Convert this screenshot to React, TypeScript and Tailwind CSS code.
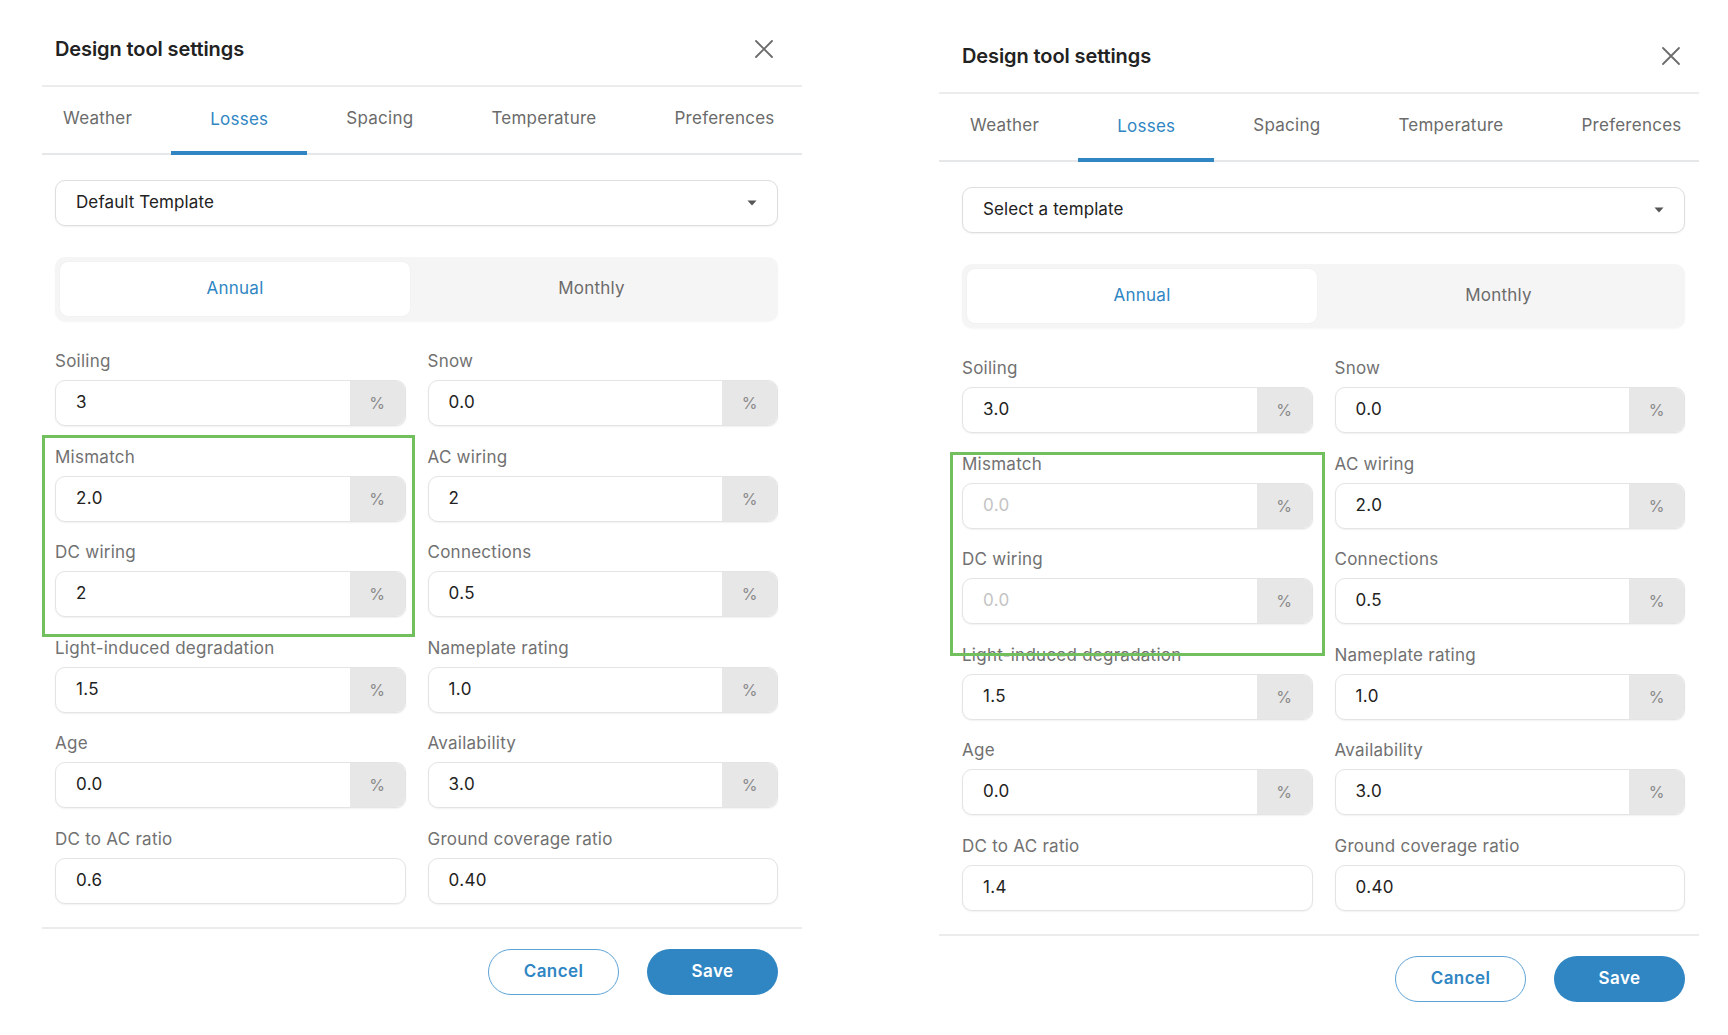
import React from "react";

type Field = { label: string; value: string; pct: boolean; disabled?: boolean };

function Input({ f }: { f: Field }) {
  return (
    <div className="flex flex-col">
      <div className="h-[20px] text-[17px] leading-[20px] tracking-[0.25px] text-[#717171]">{f.label}</div>
      <div className="mt-[9px] flex h-[46px] overflow-hidden rounded-[10px] border border-[#e4e4e4] bg-white shadow-[0_1px_2px_rgba(0,0,0,0.06)]">
        <div
          className={
            f.disabled
              ? "flex flex-1 items-center pl-[20px] text-[17px] tracking-[0.4px] text-[#c4c4c4]"
              : "flex flex-1 items-center pl-[20px] text-[17px] tracking-[0.4px] text-[#222]"
          }
        >
          {f.value}
        </div>
        {f.pct && (
          <div className="flex w-[55px] items-center justify-center bg-[#e7e7e7] text-[16px] text-[#8a8a8a]">%</div>
        )}
      </div>
    </div>
  );
}

function Panel({
  template,
  fields,
  box,
  right,
}: {
  template: string;
  fields: Field[];
  box: string;
  right?: boolean;
}) {
  const tabs = ["Weather", "Losses", "Spacing", "Temperature", "Preferences"];
  return (
    <div className="w-[760px] font-['Inter',sans-serif]">
      {/* header */}
      <div
        className={
          right
            ? "flex h-[87px] items-center justify-between border-b-2 border-[#ececec] pl-[23px] pr-[18px] pt-[12px]"
            : "flex h-[87px] items-center justify-between border-b-2 border-[#ececec] pl-[13px] pr-[28px] pt-[12px]"
        }
      >
        <div className="text-[20px] font-semibold tracking-[-0.1px] text-[#222]">Design tool settings</div>
        <svg width="20" height="20" viewBox="0 0 20 20">
          <path d="M2 2 L18 18 M18 2 L2 18" stroke="#6b6b6b" strokeWidth="1.8" strokeLinecap="round" />
        </svg>
      </div>
      {/* tabs */}
      <div className="h-[68px] border-b-2 border-[#e6e7e9]">
        <div className={right ? "ml-[-8px] flex h-full" : "ml-[-18px] flex h-full"}>
          {tabs.map((t) =>
            t === "Losses" ? (
              <div key={t} className="flex h-full flex-col">
                <div className="flex flex-1 items-center px-[39px] pt-[2px] text-[17px] tracking-[0.25px] text-[#2f86c3]">{t}</div>
                <div className="mb-[-2px] h-[4px] bg-[#2f86c3]" />
              </div>
            ) : (
              <div key={t} className="flex h-full items-center px-[39px] pb-[2px] text-[17px] tracking-[0.25px] text-[#6b6b6b]">
                {t}
              </div>
            )
          )}
        </div>
      </div>
      <div className={right ? "pl-[23px] pr-[14px]" : "pl-[13px] pr-[24px]"}>
        {/* select */}
        <div className="mt-[25px] flex h-[46px] items-center justify-between rounded-[10px] border border-[#dedede] bg-white pl-[20px] pr-[20px] shadow-[0_1px_2px_rgba(0,0,0,0.06)]">
          <span className="text-[17px] tracking-[0.1px] text-[#222]">{template}</span>
          <svg width="10" height="6" viewBox="0 0 10 6">
            <path d="M0.5 0.5 L9.5 0.5 L5 5.5 Z" fill="#555" />
          </svg>
        </div>
        {/* segmented */}
        <div className="mt-[31px] flex h-[64px] rounded-[10px] bg-[#f6f5f5] p-[5px] shadow-[0_1px_2px_rgba(0,0,0,0.04)]">
          <div className="flex w-[350px] items-center justify-center rounded-[8px] bg-white text-[17px] tracking-[0.25px] text-[#2f86c3] shadow-[0_0_2px_rgba(0,0,0,0.06)]">
            Annual
          </div>
          <div className="flex flex-1 items-center justify-center text-[17px] tracking-[0.25px] text-[#6b6b6b]">Monthly</div>
        </div>
        {/* fields */}
        <div className="relative mt-[30px] grid grid-cols-2 gap-x-[22px] gap-y-[20.5px]">
          {fields.map((f) => (
            <Input key={f.label} f={f} />
          ))}
          <div className={box} />
        </div>
      </div>
      {/* footer */}
      <div className="mt-[23px] border-t-2 border-[#ececec]">
        <div className={right ? "flex justify-end gap-[28px] pr-[14px] pt-[20px]" : "flex justify-end gap-[28px] pr-[24px] pt-[20px]"}>
          <button className="h-[46px] w-[131px] rounded-full border-[1.5px] border-[#5ea3d6] bg-white text-[17px] font-semibold tracking-[0.4px] text-[#2f86c3]">
            Cancel
          </button>
          <button className="h-[46px] w-[131px] rounded-full bg-[#2f86c3] text-[17px] font-semibold tracking-[0.4px] text-white">
            Save
          </button>
        </div>
      </div>
    </div>
  );
}

export default function App() {
  const left: Field[] = [
    { label: "Soiling", value: "3", pct: true },
    { label: "Snow", value: "0.0", pct: true },
    { label: "Mismatch", value: "2.0", pct: true },
    { label: "AC wiring", value: "2", pct: true },
    { label: "DC wiring", value: "2", pct: true },
    { label: "Connections", value: "0.5", pct: true },
    { label: "Light-induced degradation", value: "1.5", pct: true },
    { label: "Nameplate rating", value: "1.0", pct: true },
    { label: "Age", value: "0.0", pct: true },
    { label: "Availability", value: "3.0", pct: true },
    { label: "DC to AC ratio", value: "0.6", pct: false },
    { label: "Ground coverage ratio", value: "0.40", pct: false },
  ];
  const right: Field[] = [
    { label: "Soiling", value: "3.0", pct: true },
    { label: "Snow", value: "0.0", pct: true },
    { label: "Mismatch", value: "0.0", pct: true, disabled: true },
    { label: "AC wiring", value: "2.0", pct: true },
    { label: "DC wiring", value: "0.0", pct: true, disabled: true },
    { label: "Connections", value: "0.5", pct: true },
    { label: "Light-induced degradation", value: "1.5", pct: true },
    { label: "Nameplate rating", value: "1.0", pct: true },
    { label: "Age", value: "0.0", pct: true },
    { label: "Availability", value: "3.0", pct: true },
    { label: "DC to AC ratio", value: "1.4", pct: false },
    { label: "Ground coverage ratio", value: "0.40", pct: false },
  ];
  return (
    <div className="flex h-[1035px] w-[1728px] gap-[137px] bg-white pl-[42px]">
      <Panel
        template="Default Template"
        fields={left}
        box="pointer-events-none absolute left-[-13px] top-[84px] h-[202px] w-[373px] border-[3px] border-[#72bf5e]"
      />
      <div className="pt-[7px]">
        <Panel
          right
          template="Select a template"
          fields={right}
          box="pointer-events-none absolute left-[-12px] top-[94px] h-[204px] w-[375px] border-[3px] border-[#72bf5e]"
        />
      </div>
    </div>
  );
}
